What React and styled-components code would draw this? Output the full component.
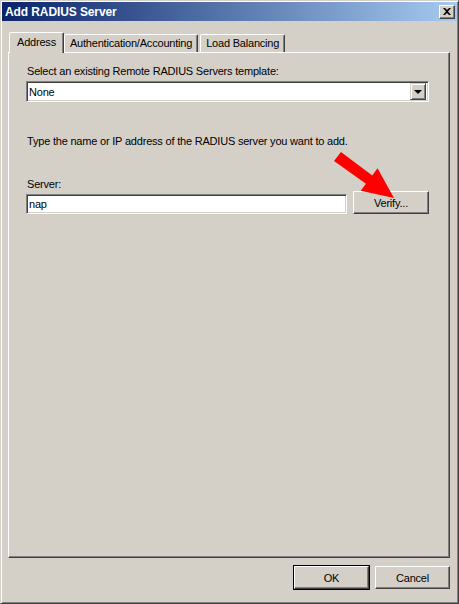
import React from "react";
import styled, { createGlobalStyle } from "styled-components";

const GlobalStyle = createGlobalStyle`
  html, body {
    margin: 0;
    padding: 0;
    background: #d4d0c8;
  }
  body {
    font-family: "Liberation Sans", Arial, sans-serif;
    font-size: 11px;
    letter-spacing: -0.2px;
    color: #000;
  }
`;

const Window = styled.div`
  position: relative;
  box-sizing: border-box;
  width: 459px;
  height: 604px;
  padding: 1px;
  display: flex;
  flex-direction: column;
  background: #d4d0c8;
  border: 1px solid;
  border-color: #d4d0c8 #404040 #404040 #d4d0c8;
  box-shadow: inset 1px 1px #fff, inset -1px -1px #808080;
`;

const TitleBar = styled.div`
  height: 19px;
  display: flex;
  align-items: center;
  justify-content: space-between;
  padding: 0 2px 0 3px;
  background: linear-gradient(to right, #0a246a, #a6caf0);
  color: #fff;
  font-weight: bold;
  font-size: 12px;
  letter-spacing: -0.1px;
`;

const CloseButton = styled.div`
  box-sizing: border-box;
  width: 16px;
  height: 14px;
  display: flex;
  align-items: center;
  justify-content: center;
  background: #d4d0c8;
  border: 1px solid;
  border-color: #fff #404040 #404040 #fff;
  box-shadow: inset -1px -1px #808080;
`;

const Body = styled.div`
  flex: 1;
  display: flex;
  flex-direction: column;
  padding: 12px 7px 13px 6px;
`;

const TabStrip = styled.div`
  display: flex;
  align-items: flex-end;
  height: 20px;
  padding-left: 2px;
  position: relative;
  z-index: 1;
  margin-bottom: -1px;
`;

const Tab = styled.div`
  box-sizing: border-box;
  height: ${(p) => (p.$active ? "21px" : "18px")};
  margin: ${(p) => (p.$active ? "0 -2px 0 -1px" : "0 0 1px 2px")};
  padding: ${(p) => (p.$active ? "3px 7px 0 7px" : "2px 5px 0 5px")};
  background: #d4d0c8;
  border: 1px solid;
  border-bottom: none;
  border-color: #fff #404040 transparent #fff;
  border-radius: 2px 2px 0 0;
  box-shadow: inset -1px 0 #808080;
  white-space: nowrap;
  position: relative;
  z-index: ${(p) => (p.$active ? 2 : 1)};
`;

const Panel = styled.div`
  flex: 1;
  box-sizing: border-box;
  display: flex;
  flex-direction: column;
  padding: 12px 20px 0 17px;
  border: 1px solid;
  border-color: #fff #404040 #404040 #fff;
  box-shadow: inset -1px -1px #808080;
`;

const Label = styled.div`
  line-height: 13px;
  height: 13px;
  padding-left: 1px;
  margin-top: ${(p) => p.$top || 0}px;
  margin-bottom: ${(p) => p.$bottom || 0}px;
  white-space: nowrap;
`;

const Sunken = styled.div`
  box-sizing: border-box;
  display: flex;
  align-items: center;
  background: #fff;
  border: 1px solid;
  border-color: #808080 #fff #fff #808080;
  box-shadow: inset 1px 1px #404040, inset -1px -1px #d4d0c8;
  padding-left: 2px;
`;

const Select = styled(Sunken)`
  height: 21px;
  justify-content: space-between;
  padding-right: 2px;
`;

const Input = styled(Sunken)`
  width: 321px;
  height: 20px;
`;

const DropButton = styled.div`
  box-sizing: border-box;
  width: 16px;
  height: 17px;
  display: flex;
  align-items: center;
  justify-content: center;
  background: #d4d0c8;
  border: 1px solid;
  border-color: #d4d0c8 #404040 #404040 #d4d0c8;
  box-shadow: inset 1px 1px #fff, inset -1px -1px #808080;
`;

const Arrow = styled.div`
  width: 0;
  height: 0;
  border-left: 4px solid transparent;
  border-right: 4px solid transparent;
  border-top: 4px solid #000;
  margin-top: 1px;
`;

const Row = styled.div`
  display: flex;
  align-items: flex-end;
  gap: 6px;
`;

const Button = styled.div`
  box-sizing: border-box;
  width: ${(p) => p.$w || 75}px;
  height: 23px;
  display: flex;
  align-items: center;
  justify-content: center;
  background: #d4d0c8;
  border: 1px solid;
  border-color: #fff #404040 #404040 #fff;
  box-shadow: inset -1px -1px #808080;
  outline: ${(p) => (p.$default ? "1px solid #000" : "none")};
  outline-offset: 0;
`;

const Footer = styled.div`
  display: flex;
  justify-content: flex-end;
  gap: 6px;
  margin-top: 8px;
`;

const Pointer = styled.svg`
  position: absolute;
  left: 0;
  top: 0;
  pointer-events: none;
`;

export default function App() {
  return (
    <>
      <GlobalStyle />
      <Window>
        <TitleBar>
          <span>Add RADIUS Server</span>
          <CloseButton>
            <svg width="8" height="7" viewBox="0 0 8 7">
              <path d="M0 0h2l2 2 2-2h2L5 3.5 8 7H6L4 5 2 7H0l3-3.5z" fill="#000" />
            </svg>
          </CloseButton>
        </TitleBar>
        <Body>
          <TabStrip>
            <Tab $active>Address</Tab>
            <Tab>Authentication/Accounting</Tab>
            <Tab>Load Balancing</Tab>
          </TabStrip>
          <Panel>
            <Label $bottom={3}>Select an existing Remote RADIUS Servers template:</Label>
            <Select>
              <span>None</span>
              <DropButton>
                <Arrow />
              </DropButton>
            </Select>
            <Label $top={33}>
              Type the name or IP address of the RADIUS server you want to add.
            </Label>
            <Label $top={30}>Server:</Label>
            <Row>
              <Input>nap</Input>
              <Button $w={76}>Verify...</Button>
            </Row>
          </Panel>
          <Footer>
            <Button $default>OK</Button>
            <Button>Cancel</Button>
          </Footer>
        </Body>
        <Pointer width="459" height="604" viewBox="0 0 459 604">
          <polygon
            points="333,160 340,151 371.3,174.4 376.5,167.3 393,197 359.7,189.8 364.9,182.8"
            fill="#ff0000"
          />
        </Pointer>
      </Window>
    </>
  );
}
